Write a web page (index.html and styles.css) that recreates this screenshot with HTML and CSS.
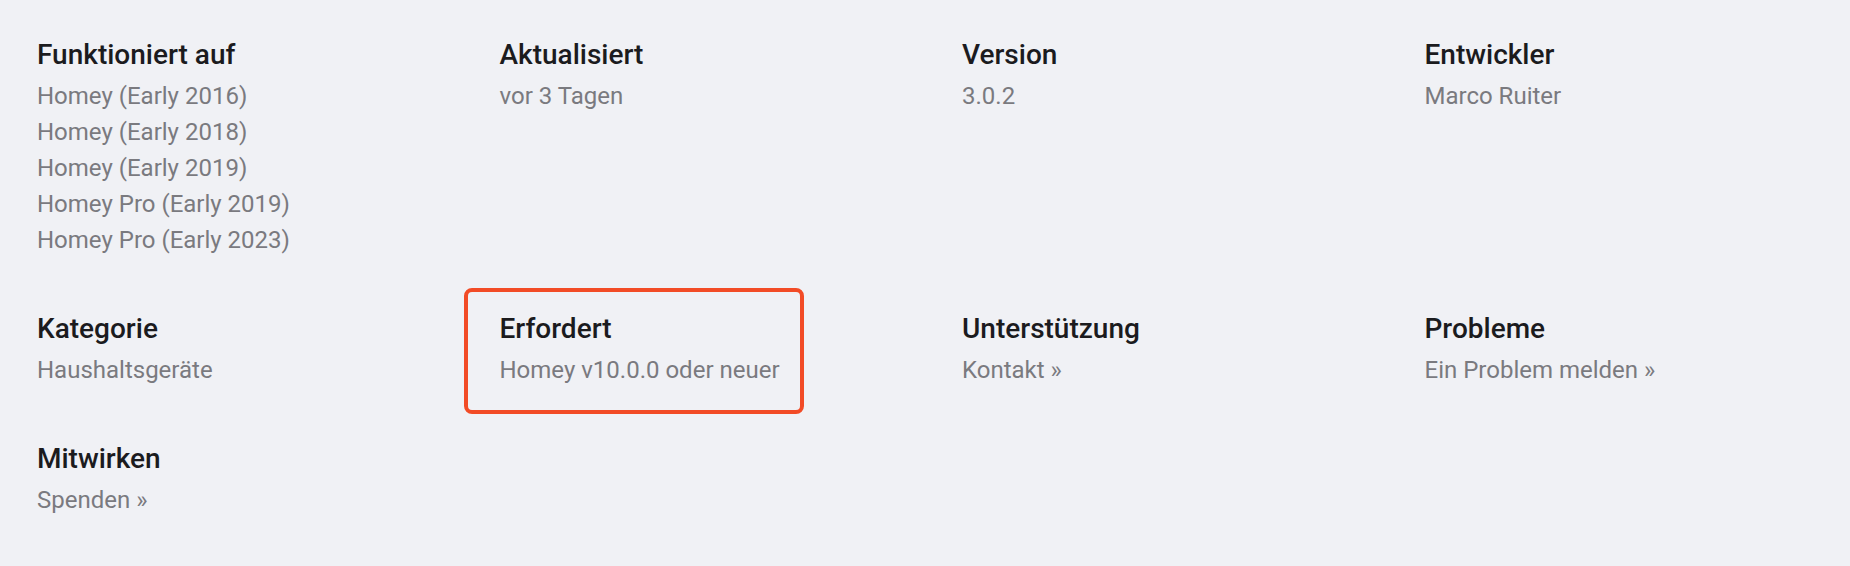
FILE: index.html
```html
<!DOCTYPE html>
<html lang="de">
<head>
<meta charset="utf-8">
<title>App-Details</title>
<link rel="stylesheet" href="styles.css">
</head>
<body>
<main class="details">
  <section class="item">
    <h3 class="label">Funktioniert auf</h3>
    <div class="value">Homey (Early 2016)</div>
    <div class="value">Homey (Early 2018)</div>
    <div class="value">Homey (Early 2019)</div>
    <div class="value">Homey Pro (Early 2019)</div>
    <div class="value">Homey Pro (Early 2023)</div>
  </section>
  <section class="item">
    <h3 class="label">Aktualisiert</h3>
    <div class="value">vor 3 Tagen</div>
  </section>
  <section class="item">
    <h3 class="label">Version</h3>
    <div class="value">3.0.2</div>
  </section>
  <section class="item">
    <h3 class="label">Entwickler</h3>
    <div class="value">Marco Ruiter</div>
  </section>
  <section class="item">
    <h3 class="label">Kategorie</h3>
    <div class="value">Haushaltsgeräte</div>
  </section>
  <section class="item">
    <div class="highlight">
      <h3 class="label">Erfordert</h3>
      <div class="value">Homey v10.0.0 oder neuer</div>
    </div>
  </section>
  <section class="item">
    <h3 class="label">Unterstützung</h3>
    <a class="value link" href="#">Kontakt »</a>
  </section>
  <section class="item">
    <h3 class="label">Probleme</h3>
    <a class="value link" href="#">Ein Problem melden »</a>
  </section>
  <section class="item">
    <h3 class="label">Mitwirken</h3>
    <a class="value link" href="#">Spenden »</a>
  </section>
</main>
</body>
</html>
```
FILE: styles.css
```css
html, body {
  margin: 0;
  padding: 0;
  background: #f0f1f5;
}
body {
  font-family: Roboto, "Liberation Sans", Arial, sans-serif;
  width: 1850px;
  height: 566px;
  overflow: hidden;
}
.details {
  display: grid;
  grid-template-columns: repeat(4, 1fr);
  column-gap: 74px;
  row-gap: 50px;
  padding: 34px 37px 0 37px;
}
.item {
  display: flex;
  flex-direction: column;
  align-items: flex-start;
}
.label {
  margin: 0 0 2px 0;
  font-size: 28px;
  line-height: 42px;
  font-weight: 500;
  color: #1b1b1e;
}
.value {
  display: block;
  font-size: 24px;
  line-height: 36px;
  font-weight: 400;
  color: #7a7a7f;
  text-decoration: none;
}
.highlight {
  position: relative;
}
.highlight::before {
  content: "";
  position: absolute;
  top: -20px;
  left: -36px;
  right: -24px;
  bottom: -26px;
  border: 4px solid #f24b26;
  border-radius: 8px;
  pointer-events: none;
}
```
